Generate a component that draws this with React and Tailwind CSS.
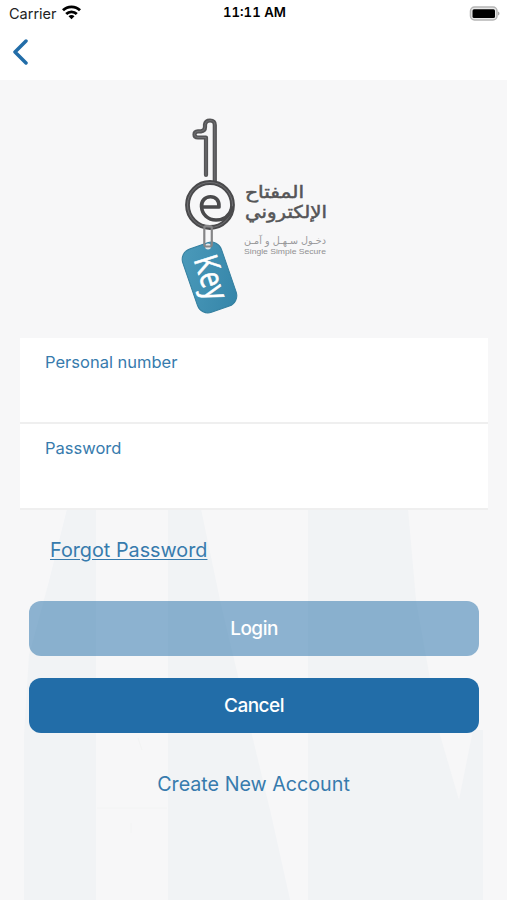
import { useState } from 'react'

function StatusBar() {
  return (
    <div className="flex h-7 items-center justify-between pr-[7px] pl-[9px] text-black">
      <div className="flex w-40 items-center gap-1.5">
        <span className="text-[14.5px] text-[#222]">Carrier</span>
        <svg width="19" height="15" viewBox="0 0 19 15" className="-mt-1 -ml-px" fill="none" stroke="currentColor" strokeWidth="2.8">
          <path d="M1 5.200C5.500.7 13.500.7 18 5.200" />
          <path d="M4.200 8.900C7 6.100 12 6.100 14.800 8.900" />
          <path d="M6.500 11.200C8.300 9.500 10.700 9.500 12.500 11.200L9.500 14.200Z" fill="currentColor" stroke="none" />
        </svg>
      </div>
      <span className="-mt-0.5 text-[13.2px] font-semibold tabular-nums">11:11 AM</span>
      <div className="flex w-40 justify-end">
        <svg width="31" height="15" viewBox="0 0 31 15" className="-mt-0.5">
          <rect x="1.500" y="1" width="26.500" height="13" rx="4" fill="#e8e8e8" stroke="#b5b5b5" strokeWidth="1.500" />
          <rect x="3.500" y="3.200" width="22.500" height="8.800" rx="1.500" fill="#000" />
          <path d="M29 5.500c2 .8 2 3.200 0 4z" fill="#aaa" />
        </svg>
      </div>
    </div>
  )
}

function Logo() {
  return (
    <svg width="170" height="220" viewBox="170 105 170 220">
      <defs>
        <linearGradient id="tag" x1="0" y1="0" x2="1" y2="1">
          <stop offset="0" stopColor="#4b9aba" />
          <stop offset="1" stopColor="#3585a9" />
        </linearGradient>
      </defs>
      <g fill="none" strokeLinecap="round" strokeLinejoin="round">
        <path d="M206 175V137.500H198Q194.500 137.500 194.500 134.500Q194.500 131.500 198 131.300H201Q205 131 205 127V124.500Q205.500 120.500 210 120.500Q214.800 120.500 214.800 125V182" stroke="#555557" strokeWidth="4.200" />
        <path d="M206 175V137.500H198Q194.500 137.500 194.500 134.500Q194.500 131.500 198 131.300H201Q205 131 205 127V124.500Q205.500 120.500 210 120.500Q214.800 120.500 214.800 125V182" stroke="#77777a" strokeWidth=".8" />
        <circle cx="210" cy="205" r="22.500" stroke="#4a4a4c" strokeWidth="4.800" />
        <circle cx="210" cy="205" r="22.500" stroke="#77777a" strokeWidth=".9" />
        <path d="M203 207H219C219.500 200 215.500 196.800 210.500 196.800C204.500 196.800 201.200 201.500 201.500 206.500C202 214.500 208 220 216 220C224 220 229.500 216 232 208" stroke="#4a4a4c" strokeWidth="3.600" />
      </g>
      <rect x="-20.500" y="-33.500" width="41" height="67" rx="11" fill="url(#tag)" stroke="#347f9f" transform="translate(209.500 277.500) rotate(-19)" />
      <circle cx="208" cy="246.500" r="3" fill="#e4e8ea" />
      <rect x="204.300" y="226" width="7.500" height="20.500" rx="2" fill="none" stroke="#858587" strokeWidth="2.200" />
      <text transform="translate(193.500 259.500) rotate(72)" textLength="45" lengthAdjust="spacingAndGlyphs" fill="#fff" stroke="#fff" strokeWidth=".6" className="font-['Open_Sans'] text-[33px] font-medium">Key</text>
      <g className="font-['DejaVu_Sans',sans-serif]" direction="rtl" fill="#555557">
        <text x="304" y="198" textLength="59" lengthAdjust="spacingAndGlyphs" stroke="#555557" strokeWidth=".5" className="text-[17.5px]">المفتاح</text>
        <text x="327" y="218" textLength="82" lengthAdjust="spacingAndGlyphs" stroke="#555557" strokeWidth=".5" className="text-[17.5px]">الإلكتروني</text>
        <text x="326" y="243.500" textLength="82" lengthAdjust="spacingAndGlyphs" fill="#99999b" className="text-[10px]">دخـول سـهـل و آمـن</text>
      </g>
      <text x="244" y="253.500" textLength="82" lengthAdjust="spacingAndGlyphs" fill="#909092" className="font-['Liberation_Sans'] text-[8px]">Single Simple Secure</text>
    </svg>
  )
}

function Backdrop() {
  return (
    <svg className="absolute inset-x-0 bottom-0" width="507" height="391" viewBox="0 509 507 391" fill="#f1f3f5">
      <path d="M67 509H96V900H24V735L29 655L48 585Z" />
      <path d="M168 509H201L220 600L252 735L270 810L290 900H168Z" />
      <path d="M308 509H408L416 600L440 735L459 800L473 730H483V900H308Z" />
      <path d="M97 808H167M131 823V833M138 738L142 750" stroke="#f3f4f4" fill="none" />
    </svg>
  )
}

function Field({ label, type, value, onChange }) {
  return (
    <label className="block h-[86px] border-b-2 border-[#efefef] bg-white px-[25px] pt-3">
      <span className="block text-[16.5px] leading-6 text-[#377bad]">{label}</span>
      <input type={type} value={value} onChange={onChange} className="mt-1 h-8 w-full outline-none" />
    </label>
  )
}

export default function App() {
  const [personalNumber, setPersonalNumber] = useState('')
  const [password, setPassword] = useState('')

  return (
    <div className="relative flex h-[900px] w-[507px] flex-col overflow-hidden bg-[#f7f7f8] font-['Inter',sans-serif]">
      <Backdrop />
      <header className="relative h-20 bg-white">
        <StatusBar />
        <button aria-label="Back" className="ml-3 flex h-12 items-center text-[#226da8]">
          <svg width="17" height="26" viewBox="0 0 17 26" fill="none" stroke="currentColor" strokeWidth="3.500" strokeLinecap="round" strokeLinejoin="round">
            <path d="M14 2L3 13L14 24" />
          </svg>
        </button>
      </header>

      <main className="relative flex flex-col">
        <div className="mt-[25px] ml-[170px] h-[220px]">
          <Logo />
        </div>

        <div className="mx-5 mt-[13px] w-[468px]">
          <Field label="Personal number" type="text" value={personalNumber} onChange={(e) => setPersonalNumber(e.target.value)} />
          <Field label="Password" type="password" value={password} onChange={(e) => setPassword(e.target.value)} />
        </div>

        <a href="#" className="mt-[26px] ml-[50px] self-start text-[19.8px] leading-7 text-[#377bad] underline underline-offset-2">
          Forgot Password
        </a>

        <div className="mt-[37px] ml-[29px] flex w-[450px] flex-col gap-[22px] text-[19px] tracking-[-0.5px] text-white">
          <button className="h-[55px] rounded-xl bg-[#226da8]/50 pt-0.5 font-medium">Login</button>
          <button className="h-[55px] rounded-xl bg-[#226da8] pt-0.5 font-medium">Cancel</button>
        </div>

        <a href="#" className="mt-[37px] self-center text-[19.7px] leading-7 text-[#377bad]">
          Create New Account
        </a>
      </main>
    </div>
  )
}
